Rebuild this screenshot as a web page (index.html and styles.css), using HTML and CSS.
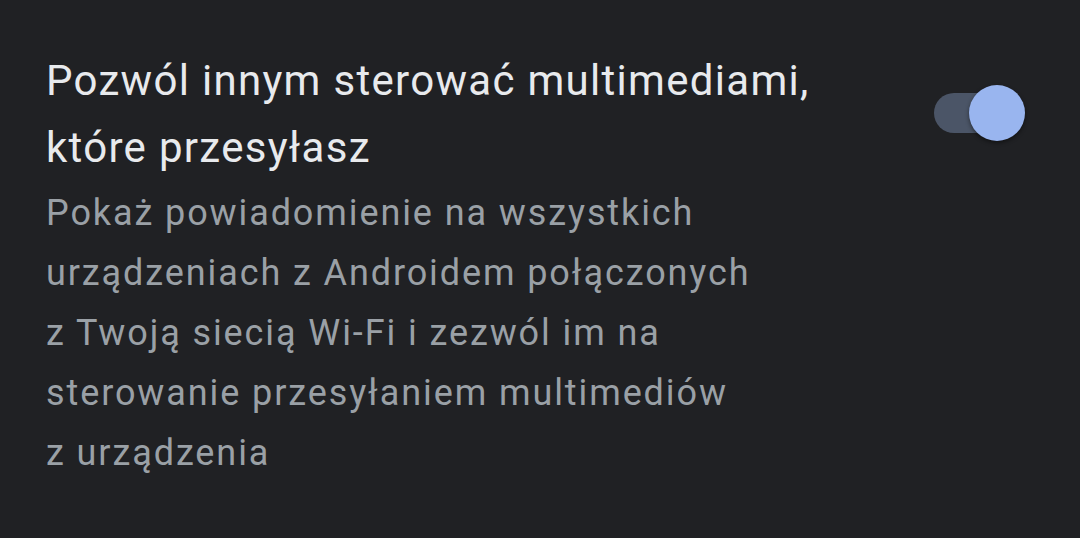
FILE: index.html
```html
<!doctype html>
<html lang="pl">
<head>
    <meta charset="UTF-8">
    <title>Ustawienia przesyłania</title>

    <link rel="stylesheet" href="styles.css">
</head>
<body>

<div class="setting">
    <div class="setting__text">
        <div class="setting__title">Pozwól innym sterować multimediami,<br>które przesyłasz</div>
        <div class="setting__summary">Pokaż powiadomienie na wszystkich<br>urządzeniach z Androidem połączonych<br>z Twoją siecią Wi-Fi i zezwól im na<br>sterowanie przesyłaniem multimediów<br>z urządzenia</div>
    </div>

    <div class="switch switch--on">
        <div class="switch__track"></div>
        <div class="switch__thumb"></div>
    </div>
</div>

</body>
</html>
```

FILE: styles.css
```css
* {
    margin: 0;
    padding: 0;
}

html,
body {
    height: 100%;
}

body {
    background-color: #202124;
    font-family: Roboto, "Noto Sans", sans-serif;
    overflow: hidden;
}

.setting {
    display: flex;
    justify-content: space-between;
    align-items: flex-start;
    padding: 47px 55px 0 46px;
}

.setting__title {
    color: #e8eaed;
    font-size: 42px;
    line-height: 67px;
    letter-spacing: 1.3px;
}

.setting__summary {
    color: #9aa0a6;
    font-size: 36px;
    line-height: 60px;
    letter-spacing: 1.9px;
    margin-top: 2px;
}

.switch {
    position: relative;
    width: 91px;
    height: 56px;
    margin-top: 38px;
}

.switch__track {
    position: absolute;
    left: 0;
    top: 8px;
    width: 80px;
    height: 40px;
    border-radius: 20px;
    background-color: #4b5567;
}

.switch__thumb {
    position: absolute;
    right: 0;
    top: 0;
    width: 56px;
    height: 56px;
    border-radius: 50%;
    background-color: #99b5ef;
    box-shadow: 0 2px 4px rgba(0, 0, 0, 0.45);
}
```
